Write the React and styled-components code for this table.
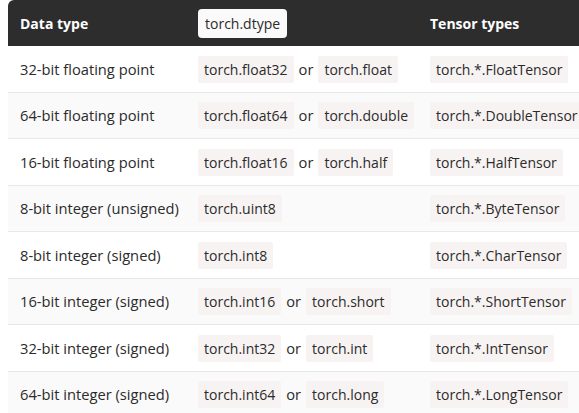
import React from 'react';
import styled, { createGlobalStyle } from 'styled-components';

const GlobalStyle = createGlobalStyle`
  body {
    margin: 0;
    background: #fff;
    font-family: "Open Sans", "Liberation Sans", sans-serif;
  }
`;

const Wrapper = styled.div`
  padding-left: 8px;
  width: 640px;
`;

const Table = styled.table`
  border-collapse: separate;
  border-spacing: 0;
  width: 640px;
  table-layout: fixed;
  font-size: 14.7px;
  color: #2b2b2b;
`;

const HeadCell = styled.th`
  background: #2d2d2d;
  color: #fff;
  font-size: 14px;
  font-weight: 700;
  text-align: left;
  height: 46px;
  padding: 0 12px;
  box-sizing: border-box;
  width: ${({ w }) => w}px;
  &:first-child {
    border-top-left-radius: 6px;
  }
`;

const Row = styled.tr`
  background: ${({ alt }) => (alt ? '#fafafa' : '#fff')};
`;

const Cell = styled.td`
  height: 46.5px;
  padding: 0 12px;
  box-sizing: border-box;
  border-bottom: 1px solid #e8e8e8;
  white-space: nowrap;
`;

const Code = styled.code`
  font-family: "Open Sans", "Liberation Sans", sans-serif;
  font-size: 14px;
  font-weight: 400;
  background: ${({ dark }) => (dark ? '#fafafa' : '#f8f3f3')};
  color: #2b2b2b;
  padding: ${({ dark }) => (dark ? '5px 7px' : '4px 6px')};
  border-radius: ${({ dark }) => (dark ? '4px' : '2px')};
`;

const Or = styled.span`
  margin: 0 5px;
`;

const rows = [
  ['32-bit floating point', 'torch.float32', 'torch.float', 'torch.*.FloatTensor'],
  ['64-bit floating point', 'torch.float64', 'torch.double', 'torch.*.DoubleTensor'],
  ['16-bit floating point', 'torch.float16', 'torch.half', 'torch.*.HalfTensor'],
  ['8-bit integer (unsigned)', 'torch.uint8', null, 'torch.*.ByteTensor'],
  ['8-bit integer (signed)', 'torch.int8', null, 'torch.*.CharTensor'],
  ['16-bit integer (signed)', 'torch.int16', 'torch.short', 'torch.*.ShortTensor'],
  ['32-bit integer (signed)', 'torch.int32', 'torch.int', 'torch.*.IntTensor'],
  ['64-bit integer (signed)', 'torch.int64', 'torch.long', 'torch.*.LongTensor'],
];

const App = () => (
  <Wrapper>
    <GlobalStyle />
    <Table>
      <thead>
        <tr>
          <HeadCell w={178}>Data type</HeadCell>
          <HeadCell w={232}>
            <Code dark>torch.dtype</Code>
          </HeadCell>
          <HeadCell w={230}>Tensor types</HeadCell>
        </tr>
      </thead>
      <tbody>
        {rows.map(([label, dtype, alias, tensor], i) => (
          <Row key={label} alt={i % 2 === 1}>
            <Cell>{label}</Cell>
            <Cell>
              <Code>{dtype}</Code>
              {alias && (
                <>
                  <Or>or</Or>
                  <Code>{alias}</Code>
                </>
              )}
            </Cell>
            <Cell>
              <Code>{tensor}</Code>
            </Cell>
          </Row>
        ))}
      </tbody>
    </Table>
  </Wrapper>
);

export default App;
